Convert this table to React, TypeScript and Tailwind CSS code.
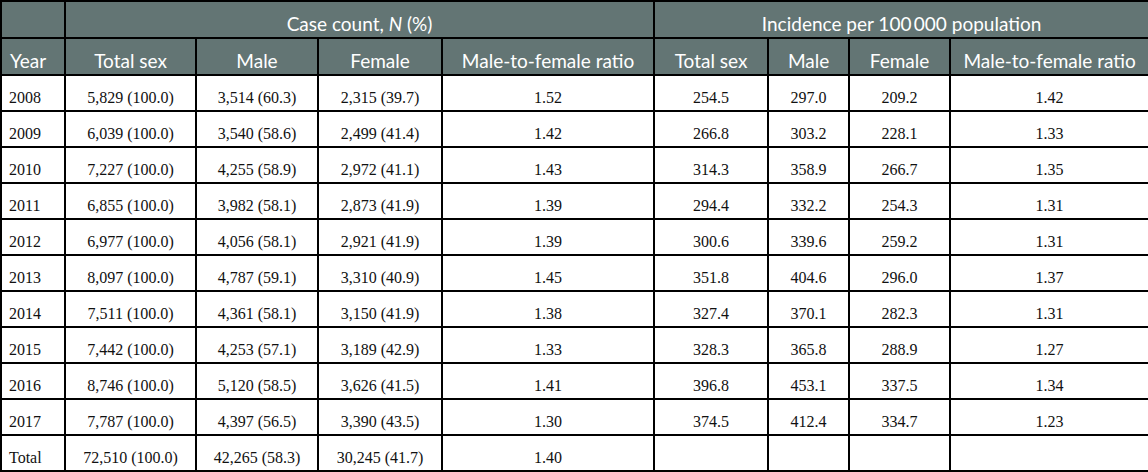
const rows: string[][] = [
  ["2008", "5,829 (100.0)", "3,514 (60.3)", "2,315 (39.7)", "1.52", "254.5", "297.0", "209.2", "1.42"],
  ["2009", "6,039 (100.0)", "3,540 (58.6)", "2,499 (41.4)", "1.42", "266.8", "303.2", "228.1", "1.33"],
  ["2010", "7,227 (100.0)", "4,255 (58.9)", "2,972 (41.1)", "1.43", "314.3", "358.9", "266.7", "1.35"],
  ["2011", "6,855 (100.0)", "3,982 (58.1)", "2,873 (41.9)", "1.39", "294.4", "332.2", "254.3", "1.31"],
  ["2012", "6,977 (100.0)", "4,056 (58.1)", "2,921 (41.9)", "1.39", "300.6", "339.6", "259.2", "1.31"],
  ["2013", "8,097 (100.0)", "4,787 (59.1)", "3,310 (40.9)", "1.45", "351.8", "404.6", "296.0", "1.37"],
  ["2014", "7,511 (100.0)", "4,361 (58.1)", "3,150 (41.9)", "1.38", "327.4", "370.1", "282.3", "1.31"],
  ["2015", "7,442 (100.0)", "4,253 (57.1)", "3,189 (42.9)", "1.33", "328.3", "365.8", "288.9", "1.27"],
  ["2016", "8,746 (100.0)", "5,120 (58.5)", "3,626 (41.5)", "1.41", "396.8", "453.1", "337.5", "1.34"],
  ["2017", "7,787 (100.0)", "4,397 (56.5)", "3,390 (43.5)", "1.30", "374.5", "412.4", "334.7", "1.23"],
  ["Total", "72,510 (100.0)", "42,265 (58.3)", "30,245 (41.7)", "1.40", "", "", "", ""],
];

const widths = [64, 131, 122, 124, 212, 114, 81, 101, 199];

const subHeads = [
  "Total sex",
  "Male",
  "Female",
  "Male-to-female ratio",
  "Total sex",
  "Male",
  "Female",
  "Male-to-female ratio",
];

const headCell =
  "border-2 border-black bg-[#637574] text-white text-[19px] leading-[19px] align-bottom pb-[4px] font-normal";
const bodyCell =
  "border-2 border-black h-[36px] text-[16px] leading-[16px] align-bottom pb-[4px] text-[#111]";

export default function App() {
  return (
    <div className="w-[1148px] h-[472px] bg-white overflow-hidden">
      <table className="w-[1148px] table-fixed border-collapse">
        <colgroup>
          {widths.map((w, i) => (
            <col key={i} style={{ width: w }} />
          ))}
        </colgroup>
        <thead style={{ fontFamily: "Lato, 'Open Sans', sans-serif" }}>
          <tr>
            <th className={`${headCell} h-[37px]`}></th>
            <th colSpan={4} className={`${headCell} h-[37px] text-center`}>
              Case count, <i>N</i> (%)
            </th>
            <th colSpan={4} className={`${headCell} h-[37px] text-center`}>
              Incidence per 100{"\u2009"}000 population
            </th>
          </tr>
          <tr>
            <th className={`${headCell} h-[37px] text-left pl-[8px]`}>Year</th>
            {subHeads.map((h, i) => (
              <th key={i} className={`${headCell} h-[37px] text-center`}>
                {h}
              </th>
            ))}
          </tr>
        </thead>
        <tbody style={{ fontFamily: "'Liberation Serif', 'Times New Roman', serif" }}>
          {rows.map((r) => (
            <tr key={r[0]}>
              {r.map((c, i) => (
                <td
                  key={i}
                  className={`${bodyCell} ${i === 0 ? "text-left pl-[7px]" : "text-center"}`}
                >
                  {c}
                </td>
              ))}
            </tr>
          ))}
        </tbody>
      </table>
    </div>
  );
}
